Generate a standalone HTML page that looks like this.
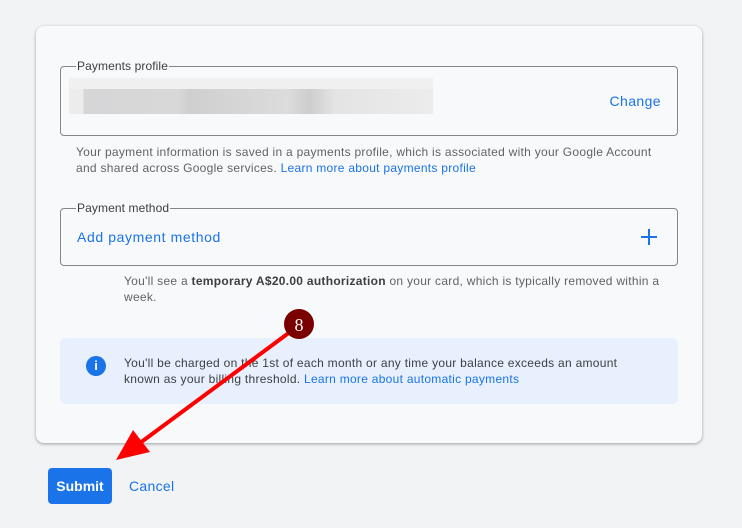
<!DOCTYPE html>
<html><head><style>
body{margin:0;width:742px;height:528px;background:#f1f3f4;font-family:"Liberation Sans",sans-serif;position:relative;overflow:hidden}
.card{position:absolute;left:36px;top:26px;width:666px;height:417px;background:#f8f9fa;border-radius:8px;box-shadow:0 1px 3px rgba(0,0,0,.35)}
.fs{position:absolute;left:60px;width:616px;border:1px solid #80868b;border-radius:4px}
.lg{position:absolute;left:15px;top:-8px;background:#f8f9fa;font-size:12px;color:#3c4043;padding:0 1px;letter-spacing:.1px}
.t{position:absolute;font-size:12px;color:#5f6368;line-height:16px;letter-spacing:.28px;white-space:nowrap}
a{color:#1a73e8;text-decoration:none}
.blur{position:absolute;height:25px;top:89px}
</style></head><body>
<div class="card"></div>
<div class="fs" style="top:66px;height:68px"><div class="lg">Payments profile</div>
<div style="position:absolute;right:16px;top:26px;font-size:14px;color:#1a73e8;letter-spacing:.4px">Change</div></div>
<div class="blur" style="left:69px;width:364px;top:78px;height:12px;background:#f0f0f1"></div>
<div class="blur" style="left:69px;width:364px;background:linear-gradient(90deg,#ececed 0,#ececed 4%,#d6d6d7 4%,#d8d8d9 30%,#cfcfd0 33%,#dcdcdd 60%,#cdcdce 66%,#e4e4e5 73%,#ececed 100%)"></div>
<div class="t" style="left:76px;top:144px">Your payment information is saved in a payments profile, which is associated with your Google Account<br>and shared across Google services. <a>Learn more about payments profile</a></div>
<div class="fs" style="top:208px;height:56px"><div class="lg">Payment method</div>
<div style="position:absolute;left:16px;top:20px;font-size:14px;color:#1a73e8;letter-spacing:.6px">Add payment method</div>
<svg style="position:absolute;right:20px;top:20px" width="16" height="16"><path d="M8 0V16M0 8H16" stroke="#1a73e8" stroke-width="2"/></svg></div>
<div class="t" style="left:124px;top:273px">You'll see a <b style="color:#3c4043">temporary A$20.00 authorization</b> on your card, which is typically removed within a<br>week.</div>
<div style="position:absolute;left:60px;top:338px;width:618px;height:66px;background:#e8f0fe;border-radius:6px"></div>
<div style="position:absolute;left:86px;top:356px;width:20px;height:20px;border-radius:50%;background:#1a73e8;color:#fff;font-weight:bold;font-size:13px;text-align:center;line-height:20px">i</div>
<div class="t" style="left:124px;top:355px;color:#3c4043">You'll be charged on the 1st of each month or any time your balance exceeds an amount<br>known as your billing threshold. <a>Learn more about automatic payments</a></div>
<div style="position:absolute;left:48px;top:468px;width:64px;height:36px;background:#1a73e8;border-radius:4px;color:#fff;font-weight:bold;font-size:14px;text-align:center;line-height:36px">Submit</div>
<div style="position:absolute;left:129px;top:478px;font-size:14px;color:#1a73e8;letter-spacing:.3px">Cancel</div>
<svg style="position:absolute;left:0;top:0" width="742" height="528">
<line x1="290" y1="332" x2="140" y2="443" stroke="#f00" stroke-width="4"/>
<polygon points="116,460 133,430 150,452" fill="#f00"/>
<circle cx="299" cy="324" r="15" fill="#7a0000"/>
<text x="299" y="331" font-size="18" fill="#fff" text-anchor="middle" font-family="Liberation Serif">8</text>
</svg>
</body></html>
